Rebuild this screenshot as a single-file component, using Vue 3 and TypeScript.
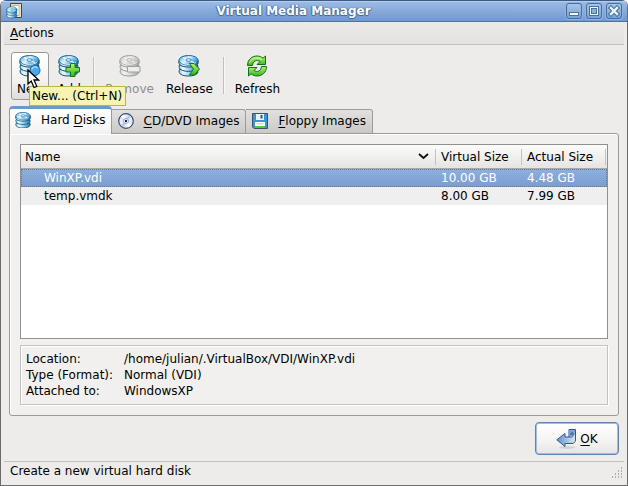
<script setup lang="ts">
import { computed, ref } from 'vue'

interface Medium {
  name: string
  virtualSize: string
  actualSize: string
  location: string
  format: string
  attachedTo: string
}

const media: Medium[] = [
  {
    name: 'WinXP.vdi',
    virtualSize: '10.00 GB',
    actualSize: '4.48 GB',
    location: '/home/julian/.VirtualBox/VDI/WinXP.vdi',
    format: 'Normal (VDI)',
    attachedTo: 'WindowsXP',
  },
  {
    name: 'temp.vmdk',
    virtualSize: '8.00 GB',
    actualSize: '7.99 GB',
    location: '',
    format: '',
    attachedTo: '',
  },
]

const tabs = [
  { id: 'disk', before: 'Hard ', key: 'D', after: 'isks' },
  { id: 'cd', before: '', key: 'C', after: 'D/DVD Images' },
  { id: 'floppy', before: '', key: 'F', after: 'loppy Images' },
]

const selected = ref(0)
const activeTab = ref('disk')
const current = computed(() => media[selected.value])
</script>

<template>
  <div class="window">
    <svg class="defs" aria-hidden="true">
      <defs>
        <linearGradient id="side" x1="0" x2="1" y1="0" y2="0">
          <stop offset="0" stop-color="#8fd0f0" />
          <stop offset="0.22" stop-color="#f4fcff" />
          <stop offset="0.5" stop-color="#9ad6f5" />
          <stop offset="1" stop-color="#1f78b8" />
        </linearGradient>
        <linearGradient id="top" x1="0" x2="1" y1="0" y2="0.600">
          <stop offset="0" stop-color="#3f9fdd" />
          <stop offset="0.3" stop-color="#9bd6f8" />
          <stop offset="0.5" stop-color="#e4f6ff" />
          <stop offset="0.7" stop-color="#7cc4f0" />
          <stop offset="1" stop-color="#2f8fd4" />
        </linearGradient>
        <linearGradient id="green" x1="0" x2="0" y1="0" y2="1">
          <stop offset="0" stop-color="#b4f66a" />
          <stop offset="1" stop-color="#31b51c" />
        </linearGradient>
        <linearGradient id="arrow" x1="0" x2="1" y1="0" y2="0">
          <stop offset="0" stop-color="#5f92c9" />
          <stop offset="1" stop-color="#dce9f6" />
        </linearGradient>
        <symbol id="disks" viewBox="0 0 22 22">
          <path d="M1.500 14.500q-.5 1-.3 2.800c1 5 17.600 5 18.600 0q.2-1.800-.3-2.800z" fill="url(#side)" stroke="#17506f" />
          <path d="M1.500 10q-.6 1-.3 2.600c1 5 17.600 5 18.600 0q.3-1.600-.3-2.600z" fill="url(#side)" stroke="#17506f" />
          <path d="M.9 5.500v2.700c1 5.200 18.200 5.200 19.200 0V5.500z" fill="url(#side)" stroke="#17506f" />
          <ellipse cx="10.500" cy="5.300" rx="9.600" ry="4.800" fill="url(#top)" stroke="#1f6592" />
          <path d="M3 7.300c3 2.800 12 2.800 15 0" fill="none" stroke="#e9f9ff" stroke-width="0.900" />
          <path d="M10.500 5L5 2.500M10.500 5.500l5.500 2" stroke="#fff" stroke-width="1.200" />
          <ellipse cx="10.500" cy="5" rx="2.600" ry="1.300" fill="#e9f8ff" stroke="#2f7cab" stroke-width="0.900" />
        </symbol>
      </defs>
    </svg>

    <header class="titlebar">
      <svg class="app-icon" viewBox="0 0 16 16" aria-hidden="true">
        <path d="M4.500 .5h11v14h-11z" fill="#e9dfc5" stroke="#4a4433" />
        <path d="M7 2.500h6v10H7z" fill="#fff" stroke="#b3a98b" stroke-width="0.800" />
        <use href="#disks" x="0" y="3" width="12" height="13" />
      </svg>
      <h1>Virtual Media Manager</h1>
      <div class="controls">
        <button type="button" aria-label="Minimize">
          <svg viewBox="0 0 14 14">
            <path d="M2 8h10v4H2z" fill="#48729f" />
            <path d="M3 9h8v2H3z" fill="#f4f8fd" />
          </svg>
        </button>
        <button type="button" aria-label="Maximize">
          <svg viewBox="0 0 14 14">
            <path d="M2 2h10v10H2z" fill="#48729f" />
            <path d="M3 3h8v8H3z" fill="#eef4fb" />
            <path d="M4 4h6v6H4z" fill="#48729f" />
            <path d="M5 5h4v4H5z" fill="#8fb0db" />
          </svg>
        </button>
        <button type="button" aria-label="Close">
          <svg viewBox="0 0 14 14">
            <path d="M4 4l6 6m0-6l-6 6" stroke="#48729f" stroke-width="4.500" stroke-linecap="square" />
            <path d="M4 4l6 6m0-6l-6 6" stroke="#eef4fb" stroke-width="2.300" stroke-linecap="square" />
          </svg>
        </button>
      </div>
    </header>

    <nav class="menubar"><button type="button"><u>A</u>ctions</button></nav>

    <div class="toolbar" role="toolbar" aria-label="Media">
      <div class="tool-anchor">
        <button type="button" class="tool hover" aria-describedby="tip">
          <svg viewBox="0 0 22 22" aria-hidden="true">
            <use href="#disks" width="22" height="22" />
            <circle cx="16" cy="15.500" r="5" fill="#4aa8ea" stroke="#1667a6" />
            <path d="M12.700 14.500a3.500 3.500 0 0 1 6-1.500" fill="none" stroke="#9bd6fc" stroke-width="1.500" />
          </svg>
          <span>New</span>
        </button>
        <div id="tip" class="tooltip" role="tooltip">New... (Ctrl+N)</div>
        <svg class="pointer" viewBox="0 0 13 20" aria-hidden="true">
          <path d="M1 1v14l3.200-3 2.800 6.500 2.800-1.200L7 11h4.500z" fill="#fff" stroke="#000" stroke-width="1.300" />
        </svg>
      </div>
      <button type="button" class="tool">
        <svg viewBox="0 0 22 22" aria-hidden="true">
          <use href="#disks" width="22" height="22" />
          <path d="M12.500 8.500h4.500v4h4.500v4.500H17v4.500h-4.500V17H8v-4.500h4.500z" fill="url(#green)" stroke="#17751a" />
        </svg>
        <span>Add</span>
      </button>
      <i class="divider"></i>
      <button type="button" class="tool" disabled>
        <svg viewBox="0 0 22 22" aria-hidden="true">
          <use href="#disks" width="22" height="22" />
          <path d="M8.500 11.500h12.500v5.500H8.500z" fill="#eee" stroke="#555" />
        </svg>
        <span>Remove</span>
      </button>
      <button type="button" class="tool">
        <svg viewBox="0 0 22 22" aria-hidden="true">
          <use href="#disks" width="22" height="22" />
          <path d="M11.500 8.500h4.500l5.500 5.500-5 6h-5l4-6z" fill="url(#green)" stroke="#17751a" stroke-linejoin="round" />
        </svg>
        <span>Release</span>
      </button>
      <i class="divider"></i>
      <button type="button" class="tool">
        <svg viewBox="0 0 22 22" aria-hidden="true">
          <path d="M1.500 10.500C1.500 4.500 6 1 11 1c2.300 0 4.300.8 6 2.200L19.500 1v8.500h-8.500l3-3c-3.500-2.200-7-.5-7.500 4z" fill="url(#green)" stroke="#126c22" stroke-linejoin="round" />
          <path d="M20.500 11.500C20.500 17.500 16 21 11 21c-2.300 0-4.300-.8-6-2.200L2.500 21v-8.500H11l-3 3c3.500 2.200 7 .5 7.500-4z" fill="url(#green)" stroke="#126c22" stroke-linejoin="round" />
          <path d="M3.500 8C5 3.500 11 1.500 16 4.800" fill="none" stroke="#d5fba8" stroke-width="0.900" />
        </svg>
        <span>Refresh</span>
      </button>
    </div>

    <main>
      <div class="tabs" role="tablist">
        <button
          v-for="tab in tabs"
          :key="tab.id"
          type="button"
          role="tab"
          class="tab"
          :class="{ active: activeTab === tab.id }"
          :aria-selected="activeTab === tab.id"
          @click="activeTab = tab.id"
        >
          <svg v-if="tab.id === 'disk'" viewBox="0 0 21 21" aria-hidden="true">
            <use href="#disks" width="22" height="22" />
          </svg>
          <svg v-else-if="tab.id === 'cd'" viewBox="0 0 16 16" aria-hidden="true">
            <circle cx="8" cy="8" r="7.300" fill="#e3ecf9" stroke="#3a4b78" stroke-width="1.200" />
            <path d="M8 8L3 3.500 6 1.500zM8 8l5 4.500-3 2z" fill="#fff" />
            <path d="M8 8l2-6 3 2zM8 8l-2 6-3-2z" fill="#b9c9ef" />
            <circle cx="8" cy="8" r="2.500" fill="#fff" stroke="#8396bd" stroke-width="0.800" />
            <circle cx="8" cy="8" r="1.200" fill="#15203d" />
          </svg>
          <svg v-else viewBox="0 0 16 16" aria-hidden="true">
            <path d="M.5 .5h15v15H2l-1.500-1.500z" fill="#3795d8" stroke="#3c5566" />
            <path d="M4 1h8v6H4z" fill="#eaf3fa" />
            <path d="M8.500 2h2v3.500h-2z" fill="#33566f" />
            <path d="M3 9h10v6H3z" fill="#fff" />
            <path d="M3 13h10v2H3z" fill="#4fcb35" />
            <path d="M4.500 10.800h7" stroke="#aab4bc" stroke-width="0.800" />
          </svg>
          <span>{{ tab.before }}<u>{{ tab.key }}</u>{{ tab.after }}</span>
        </button>
      </div>

      <section class="pane">
        <div class="list">
          <table>
            <thead>
              <tr>
                <th scope="col">
                  <div class="sorted">
                    Name
                    <svg viewBox="0 0 11 7" aria-hidden="true">
                      <path d="M1 1l4.500 4L10 1" fill="none" stroke="#111" stroke-width="1.800" />
                    </svg>
                  </div>
                </th>
                <th scope="col" class="size">Virtual Size</th>
                <th scope="col" class="size">Actual Size</th>
              </tr>
            </thead>
            <tbody>
              <tr
                v-for="(medium, i) in media"
                :key="medium.name"
                :class="{ selected: selected === i }"
                @click="selected = i"
              >
                <td class="name">{{ medium.name }}</td>
                <td>{{ medium.virtualSize }}</td>
                <td>{{ medium.actualSize }}</td>
              </tr>
            </tbody>
          </table>
        </div>
        <dl class="details">
          <dt>Location:</dt>
          <dd>{{ current.location }}</dd>
          <dt>Type (Format):</dt>
          <dd>{{ current.format }}</dd>
          <dt>Attached to:</dt>
          <dd>{{ current.attachedTo }}</dd>
        </dl>
      </section>

      <div class="actions">
        <button type="button" class="ok">
          <svg viewBox="0 0 20 20" aria-hidden="true">
            <ellipse cx="11" cy="18.500" rx="8" ry="1.500" fill="#d2d2d2" />
            <path d="M13 .5h6.500V11c0 2-1.500 3.500-3.500 3.500H9v3L.8 10.800 9 4.500V8h4z" fill="url(#arrow)" stroke="#2c5b93" stroke-linejoin="round" />
            <path d="M13.500 1h5.500v4.500l-2.500 1.500h-3z" fill="#7fa6d0" />
            <path d="M13 8h2.500c1 0 1.500-.5 1.500-1.500V4h-2v2" fill="none" stroke="#2c5b93" />
          </svg>
          <span><u>O</u>K</span>
        </button>
      </div>
    </main>

    <footer class="status">
      <span>Create a new virtual hard disk</span>
      <svg viewBox="0 0 12 12" aria-hidden="true">
        <path
          d="M10 1h1M7 4h1M10 4h1M4 7h1M7 7h1M10 7h1M1 10h1M4 10h1M7 10h1M10 10h1"
          stroke="#999" stroke-width="1.500"
        />
      </svg>
    </footer>
  </div>
</template>

<style>
body {
  margin: 0;
  background: #fff;
}
</style>

<style scoped>
.window {
  box-sizing: border-box;
  min-height: 100vh;
  display: flex;
  flex-direction: column;
  border: 1px solid #6b6b6b;
  border-top: 0;
  border-radius: 6px 6px 0 0;
  background: #edeceb;
  color: #000;
  font: 12px/16px "DejaVu Sans", sans-serif;
  overflow: hidden;
}
.defs {
  position: absolute;
  width: 0;
  height: 0;
}
button {
  margin: 0;
  padding: 0;
  border: 0;
  background: none;
  color: inherit;
  font: inherit;
}
svg {
  display: block;
}
u {
  text-decoration: underline;
  text-underline-offset: 2px;
}
.titlebar {
  box-sizing: border-box;
  height: 22px;
  display: grid;
  grid-template-columns: 24px 1fr 64px;
  align-items: center;
  padding: 0 5px 0 4px;
  border-top: 1px solid #3d5a85;
  border-bottom: 1px solid #4a74aa;
  background: linear-gradient(#9dbce6, #86abdb 50%, #7299cb);
  box-shadow: inset 0 1px #b4ceef;
}
.app-icon {
  width: 16px;
  height: 16px;
  margin-left: 1px;
}
h1 {
  margin: 0;
  font-size: 12px;
  line-height: 16px;
  color: #fff;
  text-align: center;
  text-shadow: 0 1px 1px #3c6090, 1px 0 1px #4c72a4, -1px 0 1px #4c72a4;
}
.controls {
  display: flex;
  justify-content: flex-end;
  gap: 4px;
}
.controls button {
  box-sizing: border-box;
  width: 16px;
  height: 16px;
  border: 1px solid #456f9f;
  border-radius: 3px;
  background: linear-gradient(#a8c4e8, #7ba0d0);
  box-shadow: 0 0 0 1px #92b3dd;
}
.controls svg {
  width: 14px;
  height: 14px;
}
.menubar {
  box-sizing: border-box;
  height: 23px;
  margin: 0 3px;
  padding: 3px 6px;
  border-bottom: 1px solid #c2c1bf;
  background: linear-gradient(#ebeae9, #e3e2e0);
}
.toolbar {
  display: flex;
  align-items: flex-start;
  padding: 7px 10px 6px;
}
.tool-anchor {
  position: relative;
}
.tool {
  box-sizing: border-box;
  height: 48px;
  min-width: 40px;
  display: flex;
  flex-direction: column;
  align-items: center;
  gap: 4px;
  padding: 2px 5px;
  border: 1px solid transparent;
  border-radius: 3px;
}
.tool svg {
  width: 22px;
  height: 22px;
}
.tool.hover {
  min-width: 38px;
  border-color: #9b9997;
  background: linear-gradient(#fff, #f3f2f1 60%, #dedddb);
}
.tool:disabled {
  color: #8f8d8b;
}
.tool:disabled svg {
  filter: grayscale(1);
  opacity: 0.5;
}
.divider {
  width: 1px;
  height: 37px;
  margin: 5px 4px 0;
  background: #c1c0be;
  border-right: 1px solid #f8f8f8;
}
.tooltip {
  position: absolute;
  z-index: 2;
  left: 18px;
  top: 34px;
  padding: 1px 3px 1px 2px;
  border: 1px solid #b8b54a;
  background: #f6f4b0;
  white-space: nowrap;
}
.pointer {
  position: absolute;
  z-index: 3;
  left: 16px;
  top: 17px;
  width: 13px;
  height: 20px;
}
main {
  flex: 1;
  display: flex;
  flex-direction: column;
  padding: 0 8px;
}
.tabs {
  position: relative;
  display: flex;
  align-items: flex-end;
  height: 28px;
  margin-bottom: -1px;
}
.tab {
  box-sizing: border-box;
  height: 25px;
  display: flex;
  align-items: center;
  gap: 10px;
  padding: 0 6px 1px;
  border: 1px solid #9d9b99;
  border-left: 0;
  border-radius: 0 3px 0 0;
  background: linear-gradient(#e2e1df, #cbc9c6);
}
.tab svg {
  width: 16px;
  height: 16px;
}
.tab.active {
  height: 28px;
  padding: 0 5px 3px;
  border: 1px solid #9d9b99;
  border-top: 3px solid #6f97cb;
  border-bottom: 0;
  border-radius: 4px 4px 0 0;
  background: linear-gradient(#fff, #f3f2f1);
}
.pane {
  flex: 1;
  display: flex;
  flex-direction: column;
  gap: 6px;
  padding: 10px;
  border: 1px solid #9d9b99;
  border-radius: 0 3px 3px 3px;
  background: #f1f0ee;
  box-shadow: inset 1px 1px #fff;
}
.list {
  flex: 1;
  border: 1px solid #92908e;
  background: #fff;
}
table {
  width: 100%;
  table-layout: fixed;
  border-collapse: separate;
  border-spacing: 0;
}
th {
  height: 23px;
  padding: 0 4px;
  border-bottom: 1px solid #aaa8a5;
  background:
    linear-gradient(#c4c2c0, #c4c2c0) right 1px center / 1px 16px no-repeat,
    linear-gradient(#fcfcfb, #e5e4e2);
  font-weight: normal;
  text-align: left;
}
th.size {
  width: 78px;
}
th.size:last-child {
  width: 76px;
}
.sorted {
  display: flex;
  align-items: center;
  justify-content: space-between;
  padding-right: 4px;
}
.sorted svg {
  width: 11px;
  height: 7px;
}
td {
  height: 16px;
  padding: 1px 4px;
  background: #efefef;
}
td.name {
  padding-left: 23px;
}
.selected td {
  background: linear-gradient(#8cb0e1, #7a9dcd);
  color: #fff;
}
.selected {
  outline: 1px dotted #66799a;
  outline-offset: -1px;
}
.details {
  display: grid;
  grid-template-columns: 98px 1fr;
  grid-auto-rows: 16px;
  margin: 0;
  padding: 5px;
  border: 1px solid #c4c2c0;
  box-shadow: inset 1px 1px #fff, 1px 1px #fff;
}
dd {
  margin: 0;
}
.actions {
  display: flex;
  justify-content: flex-end;
  padding: 6px 0;
}
.ok {
  box-sizing: border-box;
  width: 84px;
  height: 33px;
  display: flex;
  align-items: center;
  justify-content: center;
  gap: 4px;
  border: 1px solid #6083b2;
  border-radius: 4px;
  background: linear-gradient(#fff, #f4f3f2 60%, #e6e5e3);
  box-shadow: inset 0 0 0 1px #a3bddf;
}
.ok svg {
  width: 20px;
  height: 20px;
}
.status {
  display: flex;
  align-items: center;
  justify-content: space-between;
  margin: 0 3px;
  padding: 1px 1px 6px 6px;
  border-top: 1px solid #c2c1bf;
}
.status svg {
  width: 12px;
  height: 12px;
  align-self: flex-end;
}
</style>
